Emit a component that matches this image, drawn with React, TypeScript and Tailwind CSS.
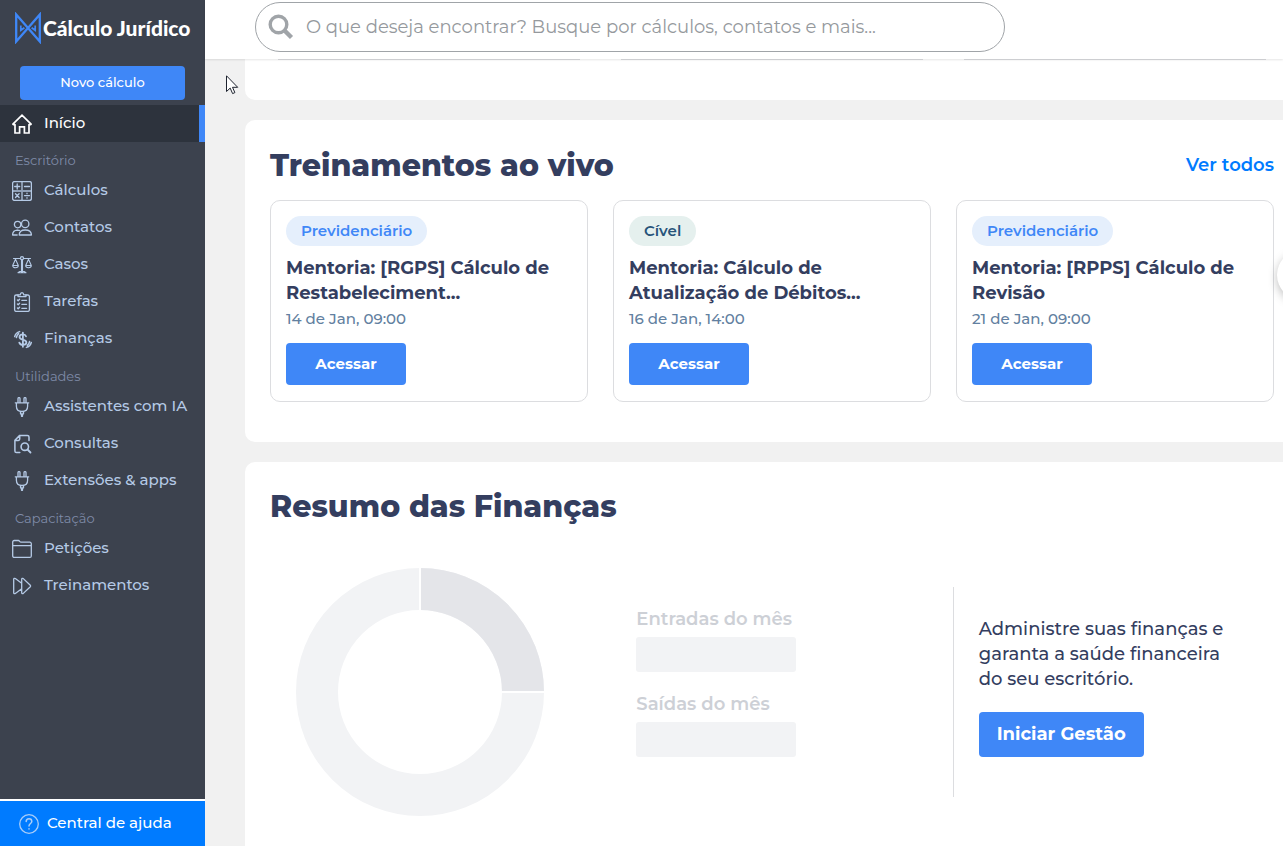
import { ReactNode } from "react";

interface NavItem {
  label: string;
  icon: ReactNode;
}

interface NavGroup {
  title: string;
  items: NavItem[];
}

interface Training {
  area: string;
  badge: string;
  title: string;
  date: string;
}

const Icon = ({ children }: { children: ReactNode }) => (
  <svg
    viewBox="0 0 20 20"
    className="h-5 w-5 shrink-0"
    fill="none"
    stroke="currentColor"
    strokeWidth="1.3"
    strokeLinecap="round"
    strokeLinejoin="round"
    aria-hidden="true">
    {children}
  </svg>
);

const HomeIcon = () => (
  <Icon>
    <path
      d="M.9 10.2 10 1.2l9.1 9M3 10.6H1.4M17 10.6h1.6M3 10.5V19h4.6v-6.2h4.8V19H17v-8.5"
      strokeWidth="1.7"
      strokeLinejoin="miter"
    />
  </Icon>
);

const CalcIcon = () => (
  <Icon>
    <rect x=".6" y=".6" width="18.8" height="18.8" rx="1.8" />
    <path d="M10 1v18M1 10h18" strokeWidth="1.8" opacity=".7" />
    <path d="M5.2 3v5M2.7 5.5h5M12.5 5.5h5M3.5 12.7l3.6 3.8M7.1 12.7l-3.6 3.8M12.5 14.6h5M15 12.2v.5M15 16.7v.5" />
  </Icon>
);

const PeopleIcon = () => (
  <Icon>
    <circle cx="5.6" cy="6.6" r="3.2" />
    <circle cx="13.2" cy="5.9" r="3.7" />
    <path d="M7.2 17c0-3 2.2-5 6.1-5s6.1 2 6.100 5zM.6 17c0-2.800 1.300-4.700 4.600-4.900M.6 17h4.600M5 12.100l2.400.3" />
  </Icon>
);

const ScaleIcon = () => (
  <Icon>
    <path
      d="M1.500 3.500h6.800M11.700 3.500h6.800M9.500 5v12M10.500 5v12M6 17.800h8l-1.800-1.300H7.800zM.7 10.500l2.800-6.300 2.800 6.300M13.700 10.500l2.800-6.300 2.800 6.300M.7 10.500h5.600c0 3-5.600 3-5.600 0zM13.700 10.500h5.600c0 3-5.600 3-5.600 0z"
      strokeWidth="1.1"
    />
    <circle cx="10" cy="3.2" r="1.5" />
  </Icon>
);

const TasksIcon = () => (
  <Icon>
    <path d="M6 3H4.200A1.600 1.600 0 0 0 2.600 4.600v13.200a1.600 1.600 0 0 0 1.600 1.600h11.600a1.600 1.600 0 0 0 1.600-1.600V4.600A1.600 1.600 0 0 0 15.800 3H14" />
    <path d="M6 4.600V2.800h2.200C8.400 1.300 9 .7 10 .7s1.600.6 1.800 2.100H14v1.800zM5.400 8l.8.800 1.400-1.500M5.400 12l.8.800 1.400-1.500M5.400 16l.8.800 1.400-1.500M9.800 8.300h4.800M9.800 12.300h4.800M9.800 16.300h4.800" />
  </Icon>
);

const MoneyIcon = () => (
  <Icon>
    <path
      d="M14 7.300c-.5-1.400-1.700-2-3.300-1.900-2 .1-3.200 1-3.200 2.600 0 3.900 6.900 1.700 6.900 5.300 0 1.700-1.300 2.600-3.400 2.600-1.900 0-3.100-.7-3.700-2.300M10.900 3.600v14.200"
      strokeWidth="1.8"
    />
    <path
      d="M2.700 7.600c.6-2.400 2.300-4.300 4.900-5M4.400 8.500c.3-1.700 1-2.900 2.200-3.900M19.300 13.400c-.6 2.400-2.300 4.300-4.900 5M17.600 12.500c-.3 1.700-1 2.900-2.200 3.900"
      strokeWidth="1.5"
    />
  </Icon>
);

const PlugIcon = () => (
  <Icon>
    <path d="M3.300 5.800h13.400M4.400 6v3.200c0 3.300 2.400 5.300 5.600 5.300s5.600-2 5.600-5.300V6M6 5.600V1.500c0-.6.4-.9 1-.9s1 .3 1 .9v4.100M12 5.600V1.500c0-.6.4-.9 1-.9s1 .3 1 .9v4.100" />
    <path d="M8.500 14.600v2.300h3v-2.300M9.500 17v2.300h1V17" />
  </Icon>
);

const SearchDocIcon = () => (
  <Icon>
    <path
      d="M17 6.500V3a1.600 1.600 0 0 0-1.600-1.600H7.700L2.900 6.200V17a1.600 1.600 0 0 0 1.600 1.600h3.300M3 6.400h3.400a1.300 1.300 0 0 0 1.300-1.300V1.600"
      strokeWidth="1.5"
    />
    <circle cx="12.800" cy="12.700" r="3.700" strokeWidth="1.6" />
    <path d="m15.500 15.500 3 3" strokeWidth="1.800" />
  </Icon>
);

const FolderIcon = () => (
  <Icon>
    <path d="M.7 6.500V3a1.500 1.500 0 0 1 1.500-1.500h4.300c1 0 1.300 1.700 2.500 1.700h8.800a1.500 1.500 0 0 1 1.500 1.500v12.200a1.500 1.500 0 0 1-1.500 1.500H2.200a1.500 1.500 0 0 1-1.500-1.500zM.7 6.700h18.600" />
  </Icon>
);

const ForwardIcon = () => (
  <Icon>
    <path d="M9.700 7.300 3.300 2.600c-.8-.6-1.600-.2-1.600.7v13.400c0 .9.800 1.300 1.600.7l6.400-4.700M9.700 3.300c0-.9.800-1.300 1.600-.7l7 6.700a1 1 0 0 1 0 1.400l-7 6.700c-.8.6-1.600.2-1.600-.7z" />
  </Icon>
);

const groups: NavGroup[] = [
  {
    title: "Escritório",
    items: [
      { label: "Cálculos", icon: <CalcIcon /> },
      { label: "Contatos", icon: <PeopleIcon /> },
      { label: "Casos", icon: <ScaleIcon /> },
      { label: "Tarefas", icon: <TasksIcon /> },
      { label: "Finanças", icon: <MoneyIcon /> },
    ],
  },
  {
    title: "Utilidades",
    items: [
      { label: "Assistentes com IA", icon: <PlugIcon /> },
      { label: "Consultas", icon: <SearchDocIcon /> },
      { label: "Extensões & apps", icon: <PlugIcon /> },
    ],
  },
  {
    title: "Capacitação",
    items: [
      { label: "Petições", icon: <FolderIcon /> },
      { label: "Treinamentos", icon: <ForwardIcon /> },
    ],
  },
];

const trainings: Training[] = [
  {
    area: "Previdenciário",
    badge: "bg-[#e5effc] text-[#3f87f7]",
    title: "Mentoria: [RGPS] Cálculo de Restabeleciment...",
    date: "14 de Jan, 09:00",
  },
  {
    area: "Cível",
    badge: "bg-[#e5f0ee] text-[#27547a]",
    title: "Mentoria: Cálculo de Atualização de Débitos...",
    date: "16 de Jan, 14:00",
  },
  {
    area: "Previdenciário",
    badge: "bg-[#e5effc] text-[#3f87f7]",
    title: "Mentoria: [RPPS] Cálculo de Revisão",
    date: "21 de Jan, 09:00",
  },
];

function Sidebar() {
  return (
    <aside className="flex w-[205px] shrink-0 flex-col bg-[#3c424e] text-[#b5cae6]">
      <a href="#" className="flex h-14 items-center gap-[2px] pl-[15px]">
        <svg
          viewBox="0 0 26 32"
          className="h-8 w-[26px] shrink-0"
          fill="none"
          stroke="#3f87f7"
          strokeWidth="2.3"
          aria-hidden="true">
          <path d="M1.200 2.500v27L24.800 2.500v27z" />
          <path d="M5.800 13.500v4.800l3.600-2.600M20.200 13.500v4.800l-3.600-2.600" strokeWidth="1.700" />
        </svg>
        <span className="font-['Lato'] text-[21px] font-black whitespace-nowrap text-white">
          Cálculo Jurídico
        </span>
      </a>
      <button className="mx-5 mt-[10px] h-[34px] rounded-[4px] bg-[#3f87f7] text-[13px] font-medium text-white">
        Novo cálculo
      </button>
      <nav className="mt-[5px] flex-1 text-[15px] font-medium">
        <a
          href="#"
          className="flex h-[37px] items-center gap-3 border-r-6 border-[#3f87f7] bg-[#2d333d] pl-3 text-white">
          <HomeIcon />
          Início
        </a>
        <div className="space-y-px">
          {groups.map((group) => (
            <div key={group.title}>
              <h3 className="flex h-[30px] items-end pl-[15px] text-[13px] leading-6 font-normal text-[#7f8ba8]">
                {group.title}
              </h3>
              <ul>
                {group.items.map((item) => (
                  <li key={item.label}>
                    <a
                      href="#"
                      className="flex h-[37px] items-center gap-3 pl-3 whitespace-nowrap">
                      {item.icon}
                      {item.label}
                    </a>
                  </li>
                ))}
              </ul>
            </div>
          ))}
        </div>
      </nav>
      <a
        href="#"
        className="flex h-[47px] items-center gap-2 border-t-2 border-white bg-[#007bff] pl-[19px] text-[15px] font-medium text-white">
        <svg
          viewBox="0 0 20 20"
          className="h-5 w-5"
          fill="none"
          stroke="#a9cdf8"
          strokeWidth="1.3"
          strokeLinecap="round"
          aria-hidden="true">
          <circle cx="10" cy="10" r="9.3" />
          <path
            d="M7.200 7.600c0-1.700 1.200-2.800 2.800-2.800s2.800 1 2.800 2.600c0 2-2.800 2.200-2.800 4.600M10 14.700v.4"
            strokeWidth="1.5"
          />
        </svg>
        Central de ajuda
      </a>
    </aside>
  );
}

function SearchBar() {
  return (
    <header className="z-10 h-[59px] shrink-0 bg-white pt-[2px] pr-[25px] pl-[50px] shadow-[0_1px_2px_rgba(0,0,0,0.1)]">
      <label className="flex h-[50px] max-w-[750px] items-center gap-3 rounded-full border border-[#a0a4a8] pl-3">
        <svg
          viewBox="0 0 26 26"
          className="h-[26px] w-[26px] shrink-0"
          fill="none"
          stroke="#a0a4a8"
          aria-hidden="true">
          <circle cx="10.500" cy="10.500" r="8.300" strokeWidth="3.400" />
          <path d="m16.500 16.500 7 7" strokeWidth="4.400" />
        </svg>
        <input
          type="search"
          aria-label="Buscar"
          placeholder="O que deseja encontrar? Busque por cálculos, contatos e mais..."
          className="h-full min-w-0 flex-1 bg-transparent text-[18px] font-normal outline-none placeholder:text-[#95999d]"
        />
      </label>
    </header>
  );
}

function TrainingCard({ training }: { training: Training }) {
  return (
    <article className="rounded-[10px] border border-[#dcdde0] px-[15px] pt-[15px] pb-4">
      <span
        className={`inline-flex h-[30px] items-center rounded-full px-[15px] text-[15px] font-semibold ${training.badge}`}>
        {training.area}
      </span>
      <h3 className="mt-[10px] pr-[10px] text-[18px] leading-[25px] font-bold">
        {training.title}
      </h3>
      <p className="text-[15px] leading-[25px] font-medium text-[#6280a0]">
        {training.date}
      </p>
      <button className="mt-3 block h-[42px] w-[120px] rounded-[4px] bg-[#3f87f7] text-[15px] font-bold text-white">
        Acessar
      </button>
    </article>
  );
}

function Trainings() {
  return (
    <section className="relative rounded-l-[10px] bg-white pt-[25px] pr-[9px] pb-10 pl-[25px]">
      <div className="mb-[15px] flex h-10 items-center justify-between">
        <h2 className="text-[30px] font-extrabold">Treinamentos ao vivo</h2>
        <a href="#" className="text-[18px] font-semibold text-[#007bff]">
          Ver todos
        </a>
      </div>
      <div className="grid grid-cols-3 gap-[25px]">
        {trainings.map((training) => (
          <TrainingCard key={training.title} training={training} />
        ))}
      </div>
      <button
        aria-label="Próximo"
        className="absolute top-[130px] -right-11 h-[50px] w-[50px] rounded-full bg-white shadow-[0_3px_10px_rgba(0,0,0,0.25)]"
      />
    </section>
  );
}

function Finances() {
  return (
    <section className="flex-1 rounded-tl-[10px] bg-white pt-[25px] pr-[9px] pl-[25px]">
      <h2 className="text-[30px] leading-10 font-extrabold">
        Resumo das Finanças
      </h2>
      <div className="mt-10 grid grid-cols-[34%_34%_1fr] items-center">
        <svg
          viewBox="0 0 250 250"
          className="ml-[25px] h-[250px] w-[250px]"
          aria-hidden="true">
          <circle
            cx="125"
            cy="125"
            r="103"
            fill="none"
            stroke="#f2f3f5"
            strokeWidth="42"
          />
          <path
            d="M125 22A103 103 0 0 1 228 125"
            fill="none"
            stroke="#e4e5e9"
            strokeWidth="42"
          />
          <path d="M125 0v43M207 125h43" stroke="#fff" strokeWidth="2" />
        </svg>
        <dl className="pb-5 pl-[25px] text-[18px] leading-[25px] font-semibold text-[#cdd0d6]">
          <dt>Entradas do mês</dt>
          <dd className="mt-[5px] mb-5 h-[35px] w-40 rounded-[3px] bg-[#f2f3f5]" />
          <dt>Saídas do mês</dt>
          <dd className="mt-[5px] h-[35px] w-40 rounded-[3px] bg-[#f2f3f5]" />
        </dl>
        <div className="flex h-[210px] flex-col items-start justify-center border-l border-[#dcdde0] pb-[10px] pl-[25px]">
          <p className="max-w-[250px] text-[18px] leading-[25px] font-medium">
            Administre suas finanças e garanta a saúde financeira do seu
            escritório.
          </p>
          <button className="mt-5 h-[45px] w-[165px] rounded-[4px] bg-[#3f87f7] text-[18px] font-bold text-white">
            Iniciar Gestão
          </button>
        </div>
      </div>
    </section>
  );
}

export default function App() {
  return (
    <div className="flex h-screen overflow-hidden bg-[#f1f1f1] font-['Montserrat','Inter',sans-serif] text-[#343e5f]">
      <Sidebar />
      <div className="flex min-w-0 flex-1 flex-col">
        <SearchBar />
        <main className="flex flex-1 flex-col gap-5 overflow-hidden pl-10">
          <section className="h-[41px] shrink-0 rounded-bl-[10px] bg-white pr-[9px] pl-[25px]">
            <div className="grid grid-cols-3 gap-[25px]">
              <div className="mx-2 h-px bg-[#dcdde0]" />
              <div className="mx-2 h-px bg-[#dcdde0]" />
              <div className="mx-2 h-px bg-[#dcdde0]" />
            </div>
          </section>
          <Trainings />
          <Finances />
        </main>
      </div>
      <svg
        viewBox="0 0 13 20"
        className="pointer-events-none absolute top-[75px] left-[226px] z-20 h-5 w-[13px]"
        fill="#fff"
        stroke="#1f2430"
        aria-hidden="true">
        <path d="M.5.8v15.700l3.700-3.400 2.400 5.500 2.300-1-2.400-5.300h5.200z" />
      </svg>
    </div>
  );
}
